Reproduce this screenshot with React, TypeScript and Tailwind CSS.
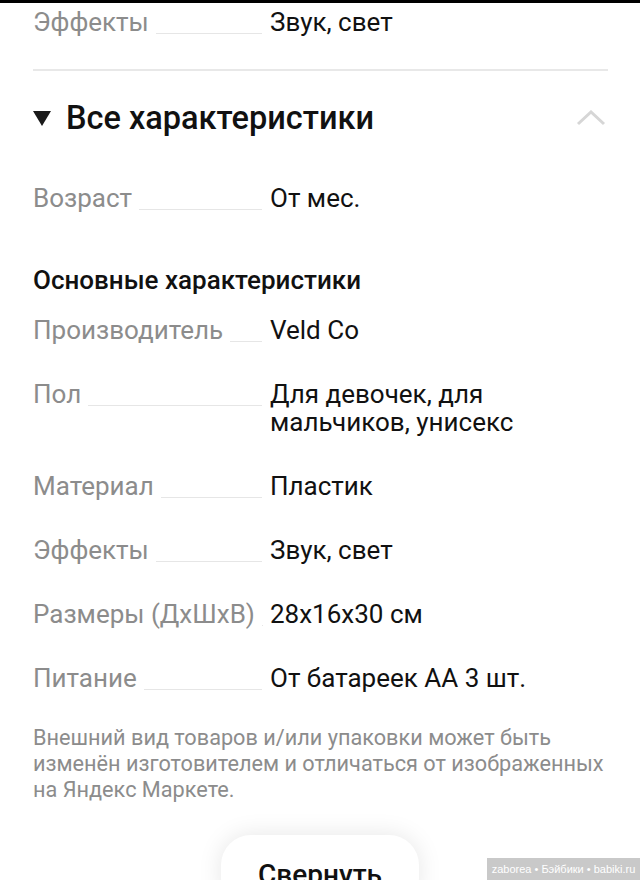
import React from "react";

const rows: { label: string; value: string }[] = [
  { label: "Производитель", value: "Veld Co" },
  { label: "Пол", value: "Для девочек, для мальчиков, унисекс" },
  { label: "Материал", value: "Пластик" },
  { label: "Эффекты", value: "Звук, свет" },
  { label: "Размеры (ДхШхВ)", value: "28x16x30 см" },
  { label: "Питание", value: "От батареек АА 3 шт." },
];

function Row({ label, value }: { label: string; value: string }) {
  return (
    <div className="grid grid-cols-[229px_1fr] gap-x-[8px] text-[26px] leading-[28px]">
      <div className="flex items-baseline min-w-0">
        <span className="text-[#8c8c8c] whitespace-nowrap">{label}</span>
        <span className="flex-1 ml-[7px] border-b border-[#e6e6e6] translate-y-[3px]" />
      </div>
      <div className="text-[#111111] max-w-[260px]">{value}</div>
    </div>
  );
}

export default function App() {
  return (
    <div
      className="relative w-[640px] h-[880px] overflow-hidden bg-white"
      style={{ fontFamily: "Roboto, 'Noto Sans', sans-serif" }}
    >
      <div className="h-[3px] bg-black" />
      <div className="px-[33px] pt-[5px]">
        <Row label="Эффекты" value="Звук, свет" />
        <div className="mt-[33px] h-[2px] bg-[#e8e8e8] w-[575px]" />
        <div className="mt-[29px] flex items-center justify-between h-[36px]">
          <div className="flex items-center">
            <svg width="18" height="16" viewBox="0 0 18 16" className="mr-[15px]">
              <polygon points="0,1 18,1 9,16" fill="#1a1a1a" />
            </svg>
            <span className="text-[32.5px] leading-[36px] font-medium text-[#111]">
              Все характеристики
            </span>
          </div>
          <svg width="30" height="16" viewBox="0 0 30 16" className="mr-[1px]">
            <polyline
              points="2,14 15,2 28,14"
              fill="none"
              stroke="#d6d6d6"
              strokeWidth="3"
            />
          </svg>
        </div>
        <div className="mt-[48px]">
          <Row label="Возраст" value="От мес." />
        </div>
        <div className="mt-[54px] text-[26px] leading-[28px] font-medium text-[#111]">
          Основные характеристики
        </div>
        <div className="mt-[22px] flex flex-col gap-[36px]">
          {rows.map((r) => (
            <Row key={r.label} label={r.label} value={r.value} />
          ))}
        </div>
        <p className="mt-[33px] text-[21.7px] leading-[26px] text-[#8c8c8c] whitespace-nowrap">
          Внешний вид товаров и/или упаковки может быть
          <br />
          изменён изготовителем и отличаться от изображенных
          <br />
          на Яндекс Маркете.
        </p>
        <div className="mt-[32px] flex justify-center">
          <button className="w-[198px] h-[72px] rounded-[30px] bg-white shadow-[0_0_24px_rgba(0,0,0,0.10)] text-[28px] font-medium text-[#111] pt-[8px]">
            Свернуть
          </button>
        </div>
      </div>
      <div
        className="absolute right-0 bottom-0 w-[153px] h-[22px] bg-[#c9c9c9] flex items-center justify-center text-[11px] text-white whitespace-nowrap"
        style={{ fontFamily: "'Liberation Sans', sans-serif" }}
      >
        zaborea • Бэйбики • babiki.ru
      </div>
    </div>
  );
}
